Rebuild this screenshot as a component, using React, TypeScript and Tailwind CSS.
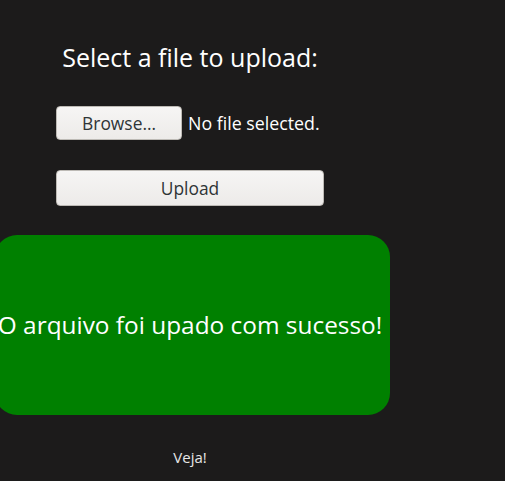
export default function App() {
  return (
    <div className="min-h-[481px] w-full bg-[#1c1b1b] font-['Open_Sans',sans-serif] text-white">
      <div className="flex w-[380px] flex-col items-center pt-[40px]">
        <h1 className="text-[25px] leading-[34px]">Select a file to upload:</h1>

        <div className="mt-[32px] flex w-[268px] items-center gap-[6px]">
          <button className="h-[34px] w-[126px] rounded-[4px] border border-[#bdbab5] bg-gradient-to-b from-[#f6f5f4] to-[#edebe9] text-[17.4px] text-[#2e3436]">
            Browse…
          </button>
          <span className="text-[17.8px]">No file selected.</span>
        </div>

        <button className="mt-[30px] h-[36px] w-[268px] rounded-[4px] border border-[#bdbab5] bg-gradient-to-b from-[#f6f5f4] to-[#edebe9] text-[17.4px] text-[#2e3436]">
          Upload
        </button>
      </div>

      <div className="-ml-[5px] mt-[29px] flex h-[180px] w-[395px] items-center justify-center rounded-[22px] bg-[#008000] pr-[5px]">
        <p className="whitespace-nowrap text-[24.4px]">O arquivo foi upado com sucesso!</p>
      </div>

      <div className="flex w-[380px] justify-center pt-[31px]">
        <a className="text-[15px] text-[#e6e6e6]">Veja!</a>
      </div>
    </div>
  );
}
